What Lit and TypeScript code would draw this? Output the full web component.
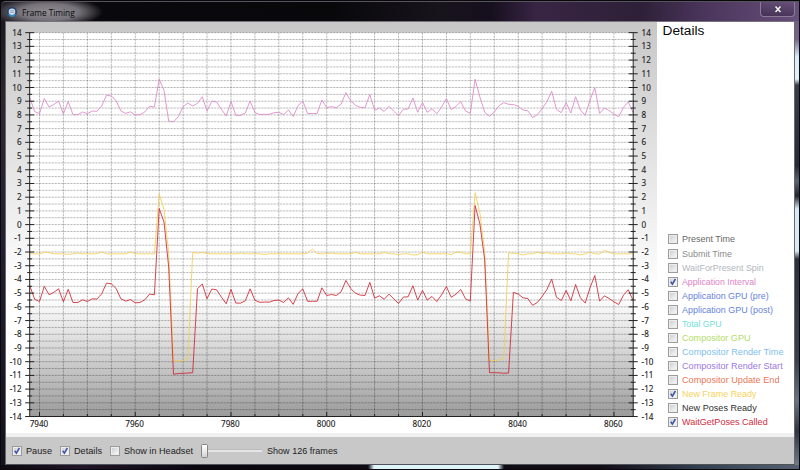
import { LitElement, html, svg, css } from "lit";
import { customElement, property } from "lit/decorators.js";
import { classMap } from "lit/directives/class-map.js";

const FIRST = 7938;
const frameX = (f: number) => 39.5 + (f - 7940) * 4.787;
const valueY = (v: number) => 224.6 - v * 13.71;

// Vertical plot position of the application interval, one entry per frame.
const INTERVAL = [
  98.3, 111.5, 113.7, 98.5, 107, 104.5, 101, 114, 101.5, 114.7, 114.7, 112, 113.7, 111, 111.3, 106, 95.3, 96, 100.7,
  111, 113.3, 111.8, 115, 114.7, 112, 106.3, 107, 79, 90.5, 121, 121.8, 116.7, 106.7, 103, 106, 103.3, 96.7, 111,
  101.3, 102, 109.3, 116, 101.5, 115.3, 115.3, 113, 101, 112.5, 114.5, 114.3, 114.3, 112.7, 112.3, 114.7, 110, 116.5,
  105.7, 101, 113.5, 113.5, 113.5, 100, 107.7, 106.7, 107.7, 104, 92.7, 100.7, 105.3, 107.3, 107.7, 94.5, 110.3, 108,
  111.5, 106.3, 111, 115.7, 109.3, 109, 98, 112.3, 102.5, 112.3, 108.7, 113.7, 107, 98.7, 109.5, 106.3, 101.7, 111,
  113.3, 79.3, 97, 112.3, 116.3, 112, 105.7, 102.7, 104.3, 104.5, 106.3, 110, 110.7, 117.5, 114.7, 108.7, 101.7,
  91.3, 109.5, 112.7, 102.7, 113, 96.7, 110, 115.3, 100, 87.7, 113.3, 108, 110.7, 114, 116.7, 107.3, 102, 112.7,
];

const CALLED_DROPS: Record<number, number> = {
  7965: 208.5, 7966: 222, 7967: 267, 7968: 374.3, 7969: 373.5, 7970: 373.3, 7971: 373, 7972: 372.7, 7973: 288.7,
  7974: 284, 8031: 205.5, 8032: 224, 8033: 260, 8034: 372.7, 8035: 372.7, 8036: 372.8, 8037: 373.3, 8038: 373,
};

const READY_POINTS: Record<number, number> = {
  7940: 254, 7941: 252.2, 7942: 252.6, 7946: 254.4, 7948: 253, 7953: 252, 7955: 254, 7959: 252, 7964: 254, 7965: 194,
  7966: 209.3, 7967: 253, 7968: 361, 7969: 361, 7970: 360.6, 7971: 358.7, 7972: 252.3, 7973: 253.2, 7974: 252.5,
  7975: 253.5, 7982: 253, 7987: 254.5, 7996: 253, 7997: 249, 7998: 253.5, 8001: 253, 8006: 252.4, 8012: 252.4,
  8015: 254.6, 8018: 255, 8019: 254.8, 8020: 252.2, 8026: 254.6, 8027: 252.2, 8028: 252.2, 8031: 192.7, 8032: 213,
  8033: 252, 8034: 360.5, 8035: 360.5, 8036: 360, 8037: 358, 8038: 253, 8039: 253.2, 8041: 255, 8044: 252, 8046: 252.4,
  8050: 253, 8053: 255, 8055: 252.2, 8057: 254, 8058: 250.4, 8059: 252.2, 8060: 254,
};

const toPoints = (ys: number[]) => ys.map((y, i) => `${frameX(FIRST + i).toFixed(1)},${y}`).join(" ");
const called = INTERVAL.map((y, i) => CALLED_DROPS[FIRST + i] ?? y + 187.8);
const ready = INTERVAL.map((_, i) => READY_POINTS[FIRST + i] ?? 253.8);

@customElement("text-label")
class TextLabel extends LitElement {
  @property() text = "";
  @property({ type: Number }) width = 50;
  @property() color = "#222";
  static styles = css`
    :host { display: block; flex: none; height: 14px; }
    svg { display: block; overflow: visible; }
    text { font: 9.4px "Liberation Sans", Arial, sans-serif; }
  `;
  render() {
    return html`<svg width=${this.width} height="14">
      <text x="0" y="10.4" fill=${this.color} textLength=${this.width} lengthAdjust="spacingAndGlyphs">${this.text}</text>
    </svg>`;
  }
}

@customElement("check-box")
class CheckBox extends LitElement {
  @property({ type: Boolean }) checked = false;
  static styles = css`
    :host { display: block; flex: none; width: 10px; height: 10px; }
    .box {
      box-sizing: border-box; width: 10px; height: 10px; border: 1px solid #9c9c9c;
      background: linear-gradient(135deg, #c6cad0, #f5f5f5 85%);
      box-shadow: inset 0 0 0 1px #ededed;
    }
    svg { display: block; width: 8px; height: 8px; overflow: visible; }
    path { fill: none; stroke: #3d54a0; stroke-width: 1.5; }
  `;
  render() {
    return html`<div class="box">
      ${this.checked ? html`<svg viewBox="0 0 8 8"><path d="M1.7 3.8 L3.4 6.1 L6.4 1" /></svg>` : ""}
    </div>`;
  }
}

@customElement("timing-chart")
class TimingChart extends LitElement {
  static styles = css`
    :host { display: block; flex: none; width: 651px; height: 411px; background: linear-gradient(#c8c8c8, #c9c9c9 8px, #fff 270px); }
    svg { display: block; }
    text { font: 8.1px "Noto Sans", sans-serif; fill: #1c1c1c; stroke: #1c1c1c; stroke-width: 0.12; }
    .end { text-anchor: end; }
    .mid { text-anchor: middle; }
    .grid { stroke: #000; stroke-opacity: 0.46; stroke-width: 0.85; stroke-dasharray: 0.75 0.72; }
    .axis { stroke: #222; stroke-width: 1; fill: none; }
    .series { fill: none; stroke-width: 0.85; stroke-linejoin: round; }
    .interval { stroke: #dc86c8; }
    .ready { stroke: #f2cf52; }
    .called { stroke: #cf2530; }
  `;
  render() {
    const halves = Array.from({ length: 57 }, (_, i) => 14 - i / 2);
    const columns = Array.from({ length: 25 }, (_, i) => 7940 + i * 5);
    return html`<svg width="651" height="411" viewBox="6 22 651 411">
      <defs>
        <linearGradient id="floor" x1="0" y1="0" x2="0" y2="1">
          <stop offset="0.69" stop-color="#fff" /><stop offset="0.85" stop-color="#cfcfcf" />
          <stop offset="1" stop-color="#9b9b9b" />
        </linearGradient>
      </defs>
      <rect x="30" y="32.6" width="603.5" height="383.9" fill="url(#floor)" />
      ${halves.map((v) => svg`<line class="grid" x1="30" x2="633" y1=${valueY(v)} y2=${valueY(v)} />`)}
      ${columns.map((f) => svg`<line class="grid" x1=${frameX(f)} x2=${frameX(f)} y1="33" y2="416" />`)}
      <polyline class="series interval" points=${toPoints(INTERVAL)} />
      <polyline class="series ready" points=${toPoints(ready)} />
      <polyline class="series called" points=${toPoints(called)} />
      <path class="axis" d="M29.7 32.6V416.5H633.2V32.6" />
      ${halves.map((v) => {
        const y = valueY(v);
        const r = v % 1 === 0 ? 4.5 : 2.5;
        return svg`<path class="axis" d="M${29.7 - r} ${y}h${r * 2}M${633.2 - r} ${y}h${r * 2}" />
          ${v % 1 === 0
            ? svg`<text class="end" x="21.6" y=${y + 3}>${v}</text><text x="641.6" y=${y + 3}>${v}</text>`
            : ""}`;
      })}
      ${columns.map((f) => svg`<path class="axis" d="M${frameX(f)} 416.5v${f % 20 === 0 ? -4.5 : -2.5}" />
        ${f % 20 === 0 ? svg`<text class="mid" x=${frameX(f) - 0.6} y="426.7">${f}</text>` : ""}`)}
    </svg>`;
  }
}

const SERIES: [string, number, string, boolean][] = [
  ["Present Time", 53, "#686868", false],
  ["Submit Time", 50, "#8c8c8c", false],
  ["WaitForPresent Spin", 81.7, "#b4b6be", false],
  ["Application Interval", 74, "#e084c8", true],
  ["Application GPU (pre)", 86.7, "#6684dc", false],
  ["Application GPU (post)", 91, "#6684dc", false],
  ["Total GPU", 39.5, "#70dedc", false],
  ["Compositor GPU", 68.5, "#b4dc68", false],
  ["Compositor Render Time", 101.5, "#82c0ec", false],
  ["Compositor Render Start", 100.7, "#a078e0", false],
  ["Compositor Update End", 97.5, "#e87858", false],
  ["New Frame Ready", 74.5, "#f6d25c", true],
  ["New Poses Ready", 74.7, "#303030", false],
  ["WaitGetPoses Called", 85.7, "#d42c3c", true],
];

@customElement("app-root")
class AppRoot extends LitElement {
  static styles = css`
    :host { display: block; width: 800px; height: 470px; overflow: hidden; background: #08070b; }
    .window {
      box-sizing: border-box; height: 470px; border: 1px solid #08070b; padding: 0 4px 4px 4px;
      display: flex; flex-direction: column;
      background:
        linear-gradient(90deg, transparent 367px, #dff4fb 373px, #dff4fb 497px, transparent 503px) 0 464px / 100% 4px no-repeat,
        linear-gradient(90deg, #0d0a10, #211529 80px, #0a0710 200px, #130c17 600px, #344050 700px, #566070) 0 464px / 100% 4px no-repeat,
        linear-gradient(#6e5680 0, #75658a 38px, #d6effa 56px, #dff4fb 78px, #3a3d46 84px, #272b33 165px, #59646f 180px, #22252b 195px, #d4ecf5 208px, #d6ecf5 250px, #2c3038 258px, #3a414b 360px, #687482 400px, #303540 430px, #7b8895 470px) 100% 0 / 5px 100% no-repeat,
        linear-gradient(#16141a, #2d2830 100px, #241f30 240px, #15111b) 0 0 / 5px 100% no-repeat;
    }
    .title {
      display: flex; align-items: center; height: 19px; flex: none; margin: 0 -4px; padding: 0 7px 0 6px;
      border-top: 1px solid #58535d; border-radius: 5px 0 0 0;
      background: radial-gradient(ellipse 54px 15px at 48px 10px, #8f8b90 0, #77737a 55%, transparent 100%),
        linear-gradient(90deg, #242128, #09080c 100px, #08080b 330px, #17141c 440px, #160f1e 490px, #382544 535px, #2e2038 640px, #49345a 700px, #67507b 800px);
    }
    .logo { display: block; width: 10px; height: 10px; margin-right: 4.5px; }
    .name { flex: 1; }
    .name text { font: 9px "Open Sans", sans-serif; fill: #0b0b0d; }
    .name svg { display: block; overflow: visible; }
    .close {
      box-sizing: border-box; width: 35px; height: 15px; margin-top: -5px; border: 1px solid #8b7b98; border-top: 0;
      border-radius: 0 0 4px 4px; display: flex; justify-content: center; align-items: center; margin-right: -3px;
      background: linear-gradient(#70598320, #31213e80);
    }
    .frame { border: 1px solid #6b6770; border-top-color: #77727c; border-bottom-color: #50525a; flex: 1; display: flex; flex-direction: column; background: #c8c8c8; }
    .main { display: flex; height: 411px; flex: none; background: #fff; }
    .details { flex: 1; padding: 0 0 0 5.5px; display: flex; flex-direction: column; }
    h1 { margin: 0; flex: 1; font: 13.7px/17px "Liberation Sans", Arial, sans-serif; color: #080808; }
    .list { display: flex; flex-direction: column; padding: 0 0 4.3px 5.7px; }
    .item { display: flex; height: 14.03px; align-items: center; gap: 4px; }
    .strip { height: 4px; flex: none; background: #f0f0f0; }
    .tools { display: flex; align-items: center; flex: 1; padding-left: 6px; }
    .tools check-box { margin-right: 3.5px; }
    .pause { margin-right: 8.5px; }
    .more { margin-right: 8.5px; }
    .headset { margin-right: 8.5px; }
    .slider { width: 61px; height: 14px; display: flex; align-items: center; margin-right: 4.5px; }
    .thumb { box-sizing: border-box; width: 7px; height: 14px; border: 1px solid #858585; border-radius: 1.5px; background: linear-gradient(#fff, #ececec 50%, #d2d2d2); }
    .track { flex: 1; height: 3px; background: #e4e4e4; border-top: 1px solid #bcbcbc; box-sizing: border-box; }
  `;
  render() {
    return html`<div class="window">
      <div class="title">
        <svg class="logo" viewBox="0 0 10 10">
          <circle cx="5" cy="5" r="4.9" fill="#1c4270" />
          <path d="M.8 6.5A4.3 4.3 0 0 0 9.2 6.5L7 8H3Z" fill="#3186c2" />
          <circle cx="5" cy="4.7" r="3.3" fill="#d3dce6" />
          <path d="M2.8 4.1Q5 2.2 7.2 4.1M3 6L4.2 4.7L5 6L5.9 4.7L7 6" fill="none" stroke="#6f8cae" stroke-width=".6" />
        </svg>
        <div class="name"><svg width="53" height="14"><text x="0" y="10.5" textLength="52.7" lengthAdjust="spacingAndGlyphs">Frame Timing</text></svg></div>
        <div class="close">
          <svg width="8" height="8" viewBox="0 0 8 8">
            <path d="M1.5 1.5L6.5 7M6.5 1.5L1.5 7" stroke="#39303f" stroke-width="3" />
            <path d="M1.5 1.5L6.5 7M6.5 1.5L1.5 7" stroke="#f0edf2" stroke-width="1.8" />
          </svg>
        </div>
      </div>
      <div class="frame">
        <div class="main">
          <timing-chart></timing-chart>
          <div class="details">
            <h1>Details</h1>
            <div class="list">
              ${SERIES.map(([name, width, color, on]) => html`<div class=${classMap({ item: true, on })}>
                <check-box ?checked=${on}></check-box>
                <text-label text=${name} width=${width} color=${color}></text-label>
              </div>`)}
            </div>
          </div>
        </div>
        <div class="strip"></div>
        <div class="tools">
          <check-box checked></check-box><text-label class="pause" text="Pause" width="26"></text-label>
          <check-box checked></check-box><text-label class="more" text="Details" width="28"></text-label>
          <check-box></check-box><text-label class="headset" text="Show in Headset" width="69"></text-label>
          <div class="slider"><div class="thumb"></div><div class="track"></div></div>
          <text-label text="Show 126 frames" width="70.5"></text-label>
        </div>
      </div>
    </div>`;
  }
}
